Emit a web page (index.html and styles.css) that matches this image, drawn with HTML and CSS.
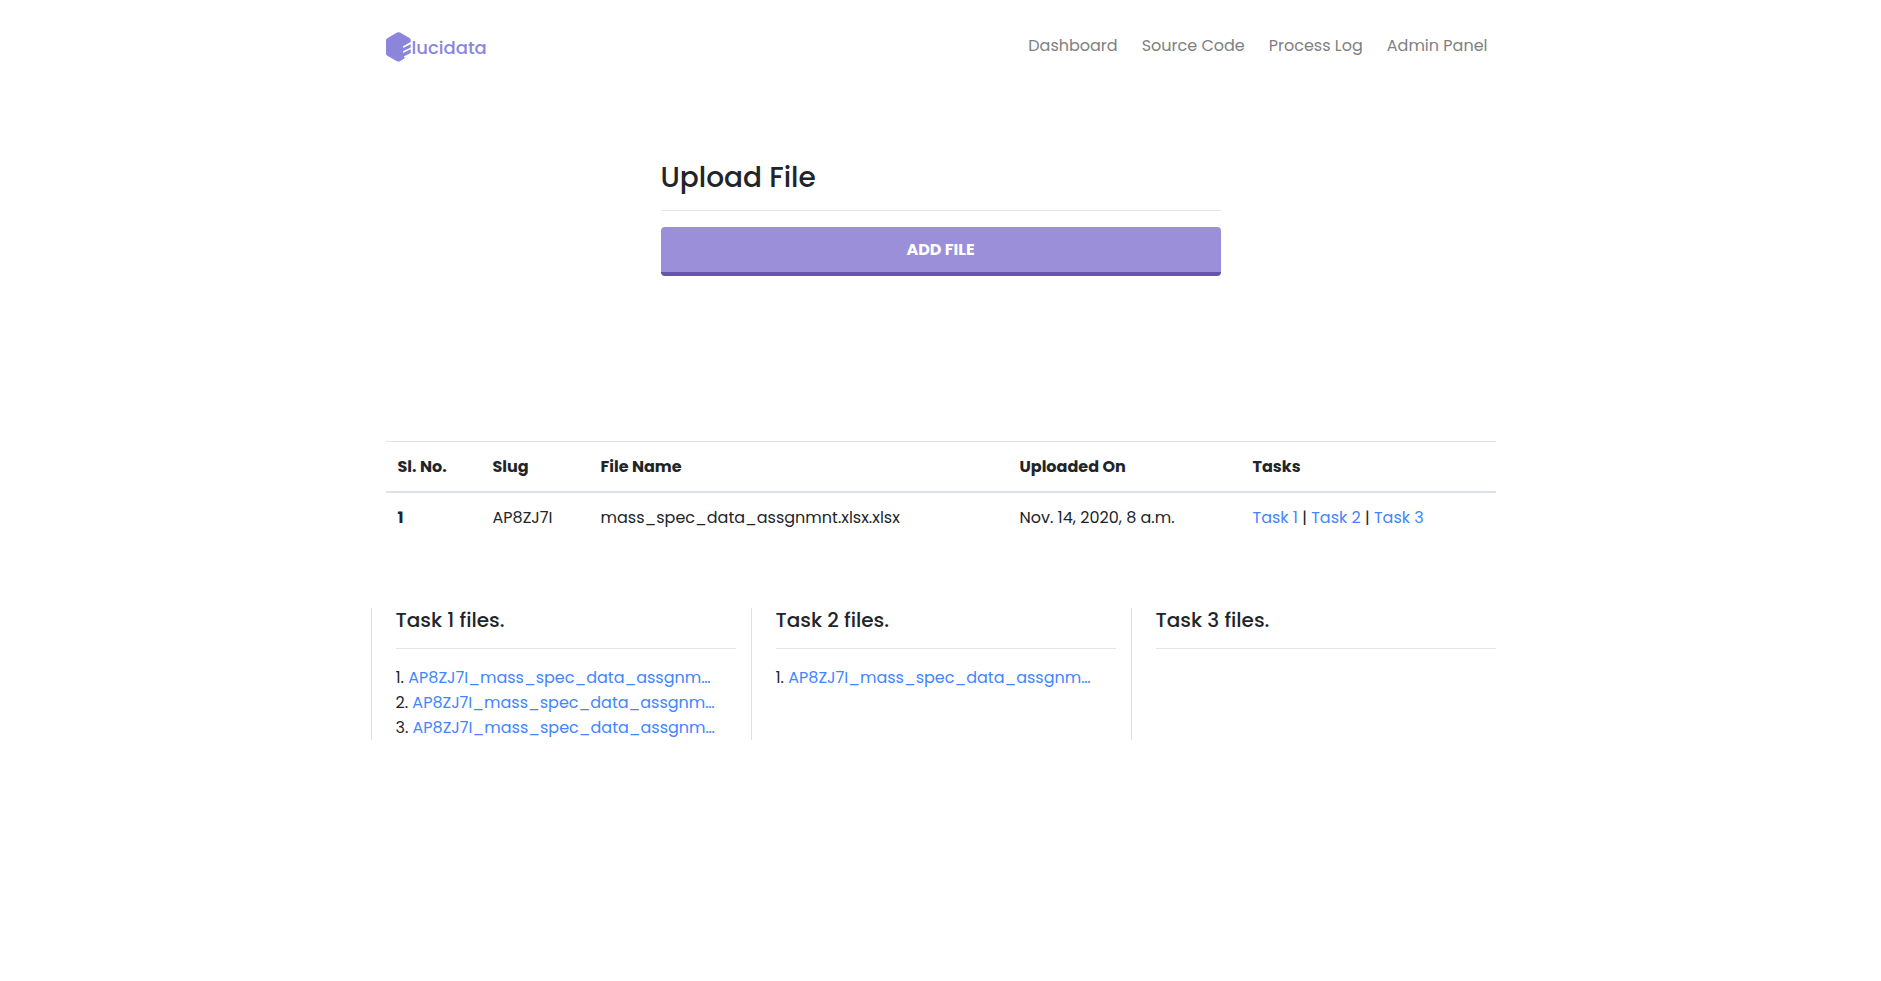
FILE: index.html
```html
<!DOCTYPE html>
<html lang="en">
<head>
<meta charset="utf-8">
<meta name="viewport" content="width=device-width, initial-scale=1">
<title>Elucidata</title>
<link rel="stylesheet" href="styles.css">
</head>
<body>
<div class="container">
  <header class="topbar">
    <a class="brand" href="#" aria-label="Elucidata">
      <svg class="brand-mark" viewBox="0 0 26 30" aria-hidden="true">
        <path fill="#8b85dc" d="M11 .6Q12.500-.2 14 .6L23.500 6Q24.700 6.700 24.700 8V10L17.500 14Q16.300 15 17.500 15.800L24.700 12.300V15.500L17.500 19Q16.300 20 17.500 20.800L24.700 17.300V21L18 24.300Q17.500 25.500 19.500 25.800L14 29.200Q12.500 30 11 29.200L1.300 23.800Q0 23 0 21.500V8.300Q0 7 1.300 6.200Z"/>
      </svg>
      <span class="brand-name">lucidata</span>
    </a>
    <nav class="nav">
      <a href="#">Dashboard</a>
      <a href="#">Source Code</a>
      <a href="#">Process Log</a>
      <a href="#">Admin Panel</a>
    </nav>
  </header>

  <main>
    <section class="upload">
      <h1>Upload File</h1>
      <button class="add-file" type="button">ADD FILE</button>
    </section>

    <table class="files">
      <colgroup>
        <col class="col-number"><col class="col-slug"><col class="col-name"><col class="col-date"><col>
      </colgroup>
      <thead>
        <tr><th scope="col">Sl. No.</th><th scope="col">Slug</th><th scope="col">File Name</th><th scope="col">Uploaded On</th><th scope="col">Tasks</th></tr>
      </thead>
      <tbody>
        <tr>
          <th scope="row">1</th>
          <td>AP8ZJ7I</td>
          <td>mass_spec_data_assgnmnt.xlsx.xlsx</td>
          <td>Nov. 14, 2020, 8 a.m.</td>
          <td><a href="#">Task 1</a> | <a href="#">Task 2</a> | <a href="#">Task 3</a></td>
        </tr>
      </tbody>
    </table>

    <div class="tasks">
      <section class="task">
        <h2>Task 1 files.</h2>
        <div>1. <a href="#">AP8ZJ7I_mass_spec_data_assgnm…</a></div>
        <div>2. <a href="#">AP8ZJ7I_mass_spec_data_assgnm…</a></div>
        <div>3. <a href="#">AP8ZJ7I_mass_spec_data_assgnm…</a></div>
      </section>
      <section class="task">
        <h2>Task 2 files.</h2>
        <div>1. <a href="#">AP8ZJ7I_mass_spec_data_assgnm…</a></div>
      </section>
      <section class="task">
        <h2>Task 3 files.</h2>
      </section>
    </div>
  </main>
</div>
</body>
</html>
```
FILE: styles.css
```css
* { box-sizing: border-box; }

body {
  margin: 0;
  background: #fff;
  color: #212529;
  font: 16px/25px Poppins, Inter, "Open Sans", sans-serif;
}

a { color: #4285ff; text-decoration: none; }
a:hover { text-decoration: underline; }
h1, h2 { margin: 0; font-weight: 500; }

.container { max-width: 1140px; margin: 0 auto; padding: 0 15px; }

.topbar {
  display: flex;
  align-items: flex-start;
  justify-content: space-between;
  padding: 32px 0 30px;
}
.brand { display: flex; align-items: flex-start; color: #8b85dc; }
.brand-mark { width: 26px; height: 30px; }
.brand-name { font-size: 18px; line-height: 32px; font-weight: 500; }
.nav { display: flex; gap: 24px; padding: 1px 8px 0 0; }
.nav a { color: #808080; }

.upload { max-width: 560px; margin: 66px auto 165px; }
.upload h1 {
  margin-bottom: 16px;
  padding-bottom: 15px;
  border-bottom: 1px solid #e5e5e5;
  font-size: 28px;
  line-height: 35px;
}
.add-file {
  display: block;
  width: 100%;
  padding: 10px;
  border: 0;
  border-bottom: 4px solid #6655ad;
  border-radius: 4px;
  background: #9a8fd8;
  color: #fff;
  font: inherit;
  font-weight: 700;
}

.files { width: 100%; table-layout: fixed; border-collapse: collapse; text-align: left; }
.files th, .files td { padding: 12px; }
.files thead th { border-top: 1px solid #dee2e6; border-bottom: 2px solid #dee2e6; }
.col-number { width: 95px; }
.col-slug { width: 108px; }
.col-name { width: 419px; }
.col-date { width: 233px; }

.tasks { display: grid; grid-template-columns: repeat(3, 1fr); margin: 66px -15px 0; }
.task { padding: 0 15px 0 24px; border-left: 1px solid #dfdfdf; }
.task h2 {
  margin-bottom: 16px;
  padding-bottom: 16px;
  border-bottom: 1px solid #e5e5e5;
  font-size: 20px;
  line-height: 24px;
}
```
